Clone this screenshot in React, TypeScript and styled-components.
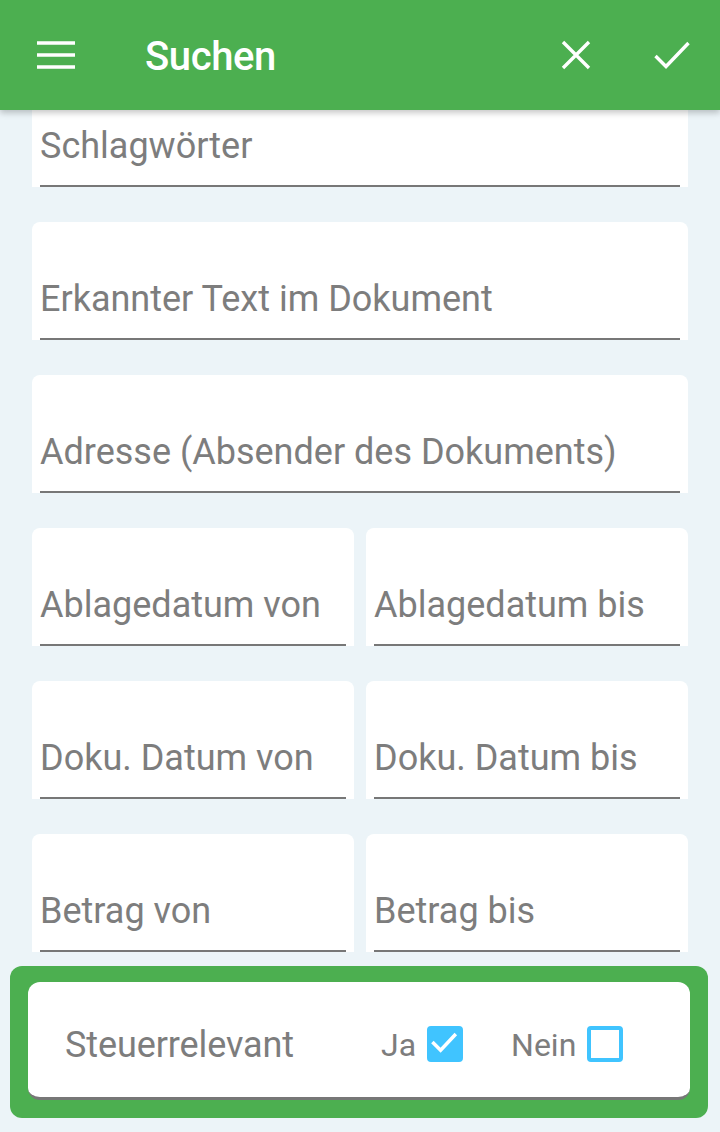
import styled, { createGlobalStyle } from 'styled-components';

const GlobalStyle = createGlobalStyle`
  html, body {
    margin: 0;
    padding: 0;
    height: 100%;
    overflow: hidden;
    background: #ecf4f8;
  }
  #root {
    height: 100%;
  }
`;

const Screen = styled.div`
  height: 100%;
  display: flex;
  flex-direction: column;
  font-family: Roboto, 'Noto Sans', sans-serif;
  background: #ecf4f8;
`;

const AppBar = styled.header`
  position: relative;
  z-index: 2;
  flex: 0 0 110px;
  display: flex;
  align-items: center;
  padding: 0 30px 0 37px;
  background: #4caf50;
  color: #fff;
  box-shadow: 0 3px 6px rgba(0, 0, 0, 0.22);
`;

const Title = styled.h1`
  flex: 1;
  margin: 2px 0 0 70px;
  font-size: 40px;
  font-weight: 500;
  letter-spacing: -0.4px;
`;

const IconButton = styled.button<{ $gap?: number }>`
  display: flex;
  align-items: center;
  justify-content: center;
  padding: 0;
  border: 0;
  background: none;
  color: #fff;
  margin-left: ${(p) => p.$gap ?? 0}px;
`;

const Scroller = styled.main`
  flex: 1;
  overflow: hidden;
`;

const FormList = styled.div`
  display: flex;
  flex-direction: column;
  gap: 35px;
  margin-top: -41px;
  padding: 0 32px;
`;

const Row = styled.div`
  display: grid;
  grid-template-columns: 1fr 1fr;
  gap: 12px;
`;

const Field = styled.div`
  height: 118px;
  display: flex;
  flex-direction: column;
  justify-content: flex-end;
  padding: 0 8px;
  background: #fff;
  border-radius: 8px 8px 0 0;
`;

const Placeholder = styled.div`
  padding: 0 0 19px 0;
  font-size: 36px;
  line-height: 40px;
  color: #7d7d7d;
  white-space: nowrap;
`;

const Underline = styled.div`
  height: 2px;
  background: #777;
`;

const Highlight = styled.section`
  margin: 14px 12px 0 10px;
  padding: 16px 18px 18px;
  background: #4caf50;
  border-radius: 12px;
`;

const ToggleCard = styled.div`
  height: 118px;
  display: flex;
  align-items: center;
  padding: 10px 0 0 37px;
  box-sizing: border-box;
  background: #fff;
  border-radius: 12px;
  border-bottom: 3px solid #777;
`;

const ToggleLabel = styled.span`
  flex: 0 0 316px;
  font-size: 36px;
  letter-spacing: -0.1px;
  color: #7d7d7d;
`;

const Option = styled.label`
  display: flex;
  align-items: center;
  gap: 11px;
  margin-right: 48px;
  font-size: 32px;
  color: #7d7d7d;
`;

const Box = styled.span<{ $checked?: boolean }>`
  width: 36px;
  height: 36px;
  margin-top: -2px;
  box-sizing: border-box;
  display: flex;
  align-items: center;
  justify-content: center;
  border-radius: 4px;
  border: 4px solid #40c4ff;
  background: ${(p) => (p.$checked ? '#40c4ff' : '#fff')};
`;

function Checkbox({ checked }: { checked?: boolean }) {
  return (
    <Box $checked={checked}>
      {checked && (
        <svg width="32" height="32" viewBox="0 0 32 32">
          <path
            d="M3 15 L11 23 L27 6"
            fill="none"
            stroke="#fff"
            strokeWidth="4"
            strokeLinecap="square"
          />
        </svg>
      )}
    </Box>
  );
}

function TextField({ label }: { label: string }) {
  return (
    <Field>
      <Placeholder>{label}</Placeholder>
      <Underline />
    </Field>
  );
}

export default function App() {
  return (
    <Screen>
      <GlobalStyle />
      <AppBar>
        <IconButton aria-label="Menü">
          <svg width="38" height="28" viewBox="0 0 38 28">
            <path d="M0 2h38M0 14h38M0 26h38" stroke="#fff" strokeWidth="3.4" />
          </svg>
        </IconButton>
        <Title>Suchen</Title>
        <IconButton aria-label="Abbrechen">
          <svg width="30" height="30" viewBox="0 0 30 30">
            <path d="M2 2L28 28M28 2L2 28" stroke="#fff" strokeWidth="3.4" />
          </svg>
        </IconButton>
        <IconButton aria-label="Übernehmen" $gap={63}>
          <svg width="36" height="28" viewBox="0 0 36 28">
            <path d="M1.5 15L12 25.5L34.5 2" fill="none" stroke="#fff" strokeWidth="3.4" />
          </svg>
        </IconButton>
      </AppBar>
      <Scroller>
        <FormList>
          <TextField label="Schlagwörter" />
          <TextField label="Erkannter Text im Dokument" />
          <TextField label="Adresse (Absender des Dokuments)" />
          <Row>
            <TextField label="Ablagedatum von" />
            <TextField label="Ablagedatum bis" />
          </Row>
          <Row>
            <TextField label="Doku. Datum von" />
            <TextField label="Doku. Datum bis" />
          </Row>
          <Row>
            <TextField label="Betrag von" />
            <TextField label="Betrag bis" />
          </Row>
        </FormList>
        <Highlight>
          <ToggleCard>
            <ToggleLabel>Steuerrelevant</ToggleLabel>
            <Option>
              Ja <Checkbox checked />
            </Option>
            <Option>
              Nein <Checkbox />
            </Option>
          </ToggleCard>
        </Highlight>
      </Scroller>
    </Screen>
  );
}
